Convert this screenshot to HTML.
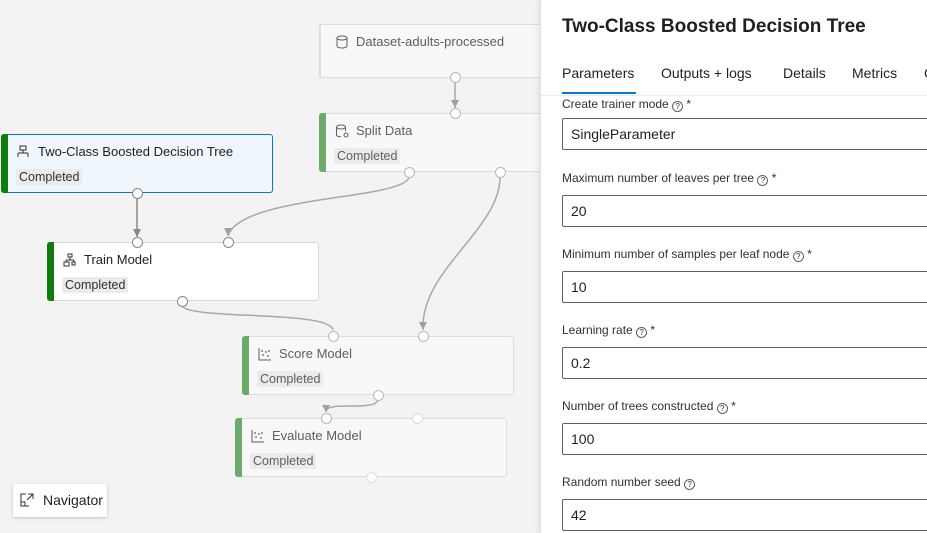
<!DOCTYPE html>
<html><head><style>
*{box-sizing:border-box;margin:0;padding:0}
body{width:927px;height:533px;overflow:hidden;background:#f3f3f3;font-family:"Liberation Sans",sans-serif;position:relative;color:#323130}
.node{position:absolute;height:59px;border:1px solid #d6d6d6;border-radius:3px;background:#fff;}
.node .bar{position:absolute;left:-1px;top:-1px;bottom:-1px;width:7px;border-radius:3px 0 0 3px;background:#107c10}
.node .t{position:absolute;left:36px;top:9px;font-size:13px;color:#201f1e}
.node .ic{position:absolute;left:15px;top:10px;width:14px;height:14px}
.node .st{position:absolute;left:14px;top:34px;font-size:12.5px;background:#ebebeb;padding:1px 3px;border-radius:2px;color:#323130}
.faded{background:#f8f8f8;border-color:#dcdcdc}
.faded .bar{background:#6aaa6a}
.faded .t,.faded .st{color:#605e5c}
.port{position:absolute;width:11px;height:11px;border:1.3px solid #8a8886;border-radius:50%;background:#fff;margin:-5.5px 0 0 -5.5px}
.pf{border-color:#b8b8b8}
.panel{position:absolute;left:540px;top:0;width:387px;height:533px;background:#fff;border-left:1px solid #e1e1e1;box-shadow:-2px 0 6px rgba(0,0,0,.08)}
.h{position:absolute;left:21px;top:16px;font-size:19px;font-weight:bold;color:#201f1e}
.tab{position:absolute;top:65px;font-size:14px;color:#201f1e}
.lab{position:absolute;left:21px;font-size:12px;color:#323130}
.q{display:inline-block;width:11px;height:11px;border:1px solid #605e5c;border-radius:50%;font-size:8px;line-height:9px;text-align:center;vertical-align:-1px}
.inp{position:absolute;left:21px;width:380px;height:32px;border:1px solid #605e5c;border-radius:2px;font-size:14px;padding:7px 8px;color:#201f1e}
</style></head><body>
<svg style="position:absolute;left:0;top:0" width="540" height="533">
<g fill="none" stroke="#a8a8a8" stroke-width="1.5">
<path d="M455 82 V108"/>
<path d="M137 198 V237" stroke="#8a8886"/>
<path d="M409 177 C405 200 240 195 228 236"/>
<path d="M500 177 C500 230 420 270 423 330"/>
<path d="M182 306 C190 320 330 310 333 330"/>
<path d="M378 400 C375 412 325 400 326 412"/>
</g>
<g fill="#a0a0a0">
<path d="M451 100 h8 l-4 8z"/><path d="M133 229 h8 l-4 8z" fill="#8a8886"/><path d="M224 228 h8 l-4 8z"/><path d="M419 322 h8 l-4 8z"/><path d="M322 405 h8 l-4 7z"/>
</g>
</svg>
<div class="node faded" style="left:319px;top:24px;width:240px;height:54px"><div class="bar" style="width:2px;background:#ddd"></div>
<svg class="ic" viewBox="0 0 14 14"><ellipse cx="7" cy="3" rx="5" ry="2" fill="none" stroke="#605e5c"/><path d="M2 3v8c0 1.1 2.2 2 5 2s5-.9 5-2V3" fill="none" stroke="#605e5c"/></svg>
<div class="t">Dataset-adults-processed</div></div>
<div class="node faded" style="left:319px;top:113px;width:240px"><div class="bar"></div>
<svg class="ic" viewBox="0 0 14 14"><ellipse cx="6" cy="3" rx="4.5" ry="2" fill="none" stroke="#605e5c"/><path d="M1.5 3v8c0 1 2 1.8 4.5 1.8M10.5 3v4" fill="none" stroke="#605e5c"/><circle cx="11" cy="11" r="2" fill="none" stroke="#605e5c"/></svg>
<div class="t">Split Data</div><div class="st">Completed</div></div>
<div class="node" style="left:1px;top:134px;width:272px;background:#eff6fc;border-color:#0078d4"><div class="bar"></div>
<svg class="ic" viewBox="0 0 14 14" style="left:14px"><rect x="4" y="1" width="6" height="4" fill="none" stroke="#323130"/><path d="M7 5v3M2 8h10M2 8v4M12 8v4" fill="none" stroke="#323130"/></svg>
<div class="t">Two-Class Boosted Decision Tree</div><div class="st">Completed</div></div>
<div class="node" style="left:47px;top:242px;width:272px"><div class="bar"></div>
<svg class="ic" viewBox="0 0 14 14"><rect x="5" y="1" width="4" height="3" fill="none" stroke="#323130"/><path d="M7 4v3M3 7h8M3 7v2M11 7v2" fill="none" stroke="#323130"/><rect x="1" y="9" width="5" height="4" fill="none" stroke="#323130"/><rect x="9" y="9" width="3" height="3" fill="none" stroke="#323130"/></svg>
<div class="t">Train Model</div><div class="st">Completed</div></div>
<div class="node faded" style="left:242px;top:336px;width:272px"><div class="bar"></div>
<svg class="ic" viewBox="0 0 14 14"><path d="M1 1v12h12" fill="none" stroke="#605e5c"/><g fill="#605e5c"><circle cx="4" cy="4" r=".9"/><circle cx="5" cy="8" r=".9"/><circle cx="8" cy="5" r=".9"/><circle cx="11" cy="4" r=".9"/><circle cx="10" cy="9" r=".9"/></g></svg>
<div class="t">Score Model</div><div class="st">Completed</div></div>
<div class="node faded" style="left:235px;top:418px;width:272px"><div class="bar"></div>
<svg class="ic" viewBox="0 0 14 14"><path d="M1 1v12h12" fill="none" stroke="#605e5c"/><g fill="#605e5c"><circle cx="4" cy="4" r=".9"/><circle cx="5" cy="8" r=".9"/><circle cx="8" cy="5" r=".9"/><circle cx="11" cy="4" r=".9"/><circle cx="10" cy="9" r=".9"/></g></svg>
<div class="t">Evaluate Model</div><div class="st">Completed</div></div>
<div class="port pf" style="left:455px;top:77px"></div><div class="port pf" style="left:455px;top:113px"></div>
<div class="port pf" style="left:409px;top:172px"></div><div class="port pf" style="left:500px;top:172px"></div>
<div class="port" style="left:137px;top:193px"></div>
<div class="port" style="left:137px;top:242px"></div><div class="port" style="left:228px;top:242px"></div>
<div class="port" style="left:182px;top:301px"></div>
<div class="port pf" style="left:333px;top:336px"></div><div class="port pf" style="left:423px;top:336px"></div>
<div class="port pf" style="left:378px;top:395px"></div>
<div class="port pf" style="left:326px;top:418px"></div><div class="port pf" style="left:417px;top:418px;border-color:#ddd"></div>
<div class="port pf" style="left:371px;top:477px;border-color:#ddd"></div>
<div style="position:absolute;left:13px;top:484px;width:94px;height:33px;background:#fff;border-radius:2px;box-shadow:0 1px 3px rgba(0,0,0,.2);font-size:14px;color:#201f1e;padding:8px 0 0 30px">Navigator
<svg style="position:absolute;left:7px;top:9px" width="14" height="14" viewBox="0 0 14 14"><path d="M1 5v8h8M1 13V1h5M8 1h5v5M13 1L7 7M1 9h4v4" fill="none" stroke="#323130"/></svg></div>
<div class="panel">
<div class="h">Two-Class Boosted Decision Tree</div>
<div class="tab" style="left:21px">Parameters</div>
<div class="tab" style="left:120px">Outputs + logs</div>
<div class="tab" style="left:242px">Details</div>
<div class="tab" style="left:311px">Metrics</div>
<div class="tab" style="left:383px">C</div>
<div style="position:absolute;left:21px;top:92px;width:74px;height:2px;background:#0078d4"></div>
<div style="position:absolute;left:0;top:95px;width:387px;height:1px;background:#edebe9"></div>
<div class="lab" style="top:97px">Create trainer mode <span class="q">?</span> *</div>
<div class="inp" style="top:118px">SingleParameter</div>
<div class="lab" style="top:171px">Maximum number of leaves per tree <span class="q">?</span> *</div>
<div class="inp" style="top:195px">20</div>
<div class="lab" style="top:247px">Minimum number of samples per leaf node <span class="q">?</span> *</div>
<div class="inp" style="top:271px">10</div>
<div class="lab" style="top:323px">Learning rate <span class="q">?</span> *</div>
<div class="inp" style="top:347px">0.2</div>
<div class="lab" style="top:399px">Number of trees constructed <span class="q">?</span> *</div>
<div class="inp" style="top:423px">100</div>
<div class="lab" style="top:475px">Random number seed <span class="q">?</span></div>
<div class="inp" style="top:499px">42</div>
</div>
</body></html>
